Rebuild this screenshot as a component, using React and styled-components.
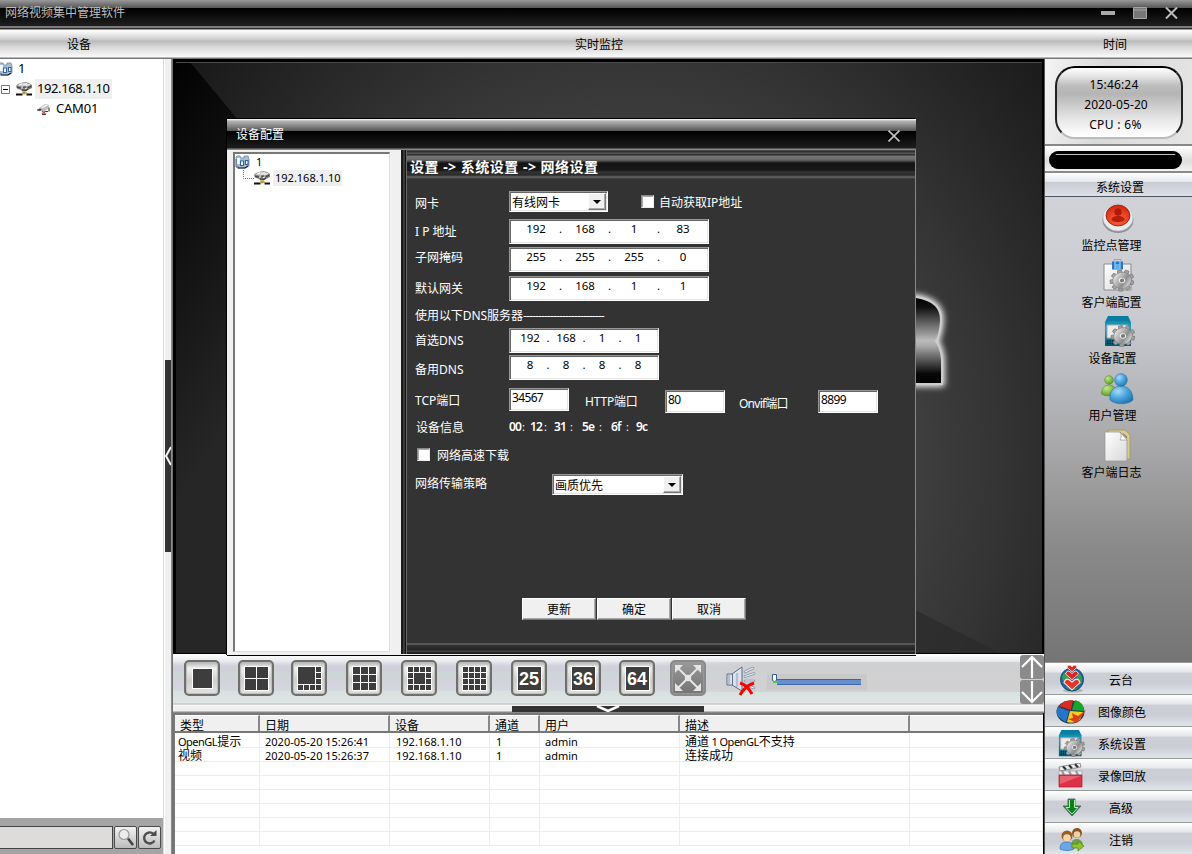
import React from "react";
import styled, { createGlobalStyle } from "styled-components";

const Global = createGlobalStyle`
  * { box-sizing: border-box; }
  html, body { margin: 0; padding: 0; overflow: hidden; }
  body { font: 12px/16px "Noto Sans", "Noto Sans CJK SC", sans-serif; color: #000; }
  svg { display: block; flex: none; }
`;

const Screen = styled.div`
  width: 1192px; height: 854px; overflow: hidden;
  display: flex; flex-direction: column; background: #000;
`;

/* ---------- top bars ---------- */
const TitleBar = styled.header`
  height: 30px; flex: none; display: flex; justify-content: space-between;
  padding: 5px 14px 0 5px; color: #bdbdbd;
  background: linear-gradient(#999 0, #555 8px, #000 8px, #1f1f1f 26px, #7c7c7c 26px, #7c7c7c 28px, #2e2e2e 28px, #2e2e2e 29px, #999 29px);
`;
const WindowControls = styled.div`display: flex; gap: 18px; padding-top: 2px;`;
const HeaderBar = styled.div`
  height: 29px; flex: none; display: flex; line-height: 29px; text-align: center;
  background: linear-gradient(#fff 0, #ececec 4px, #c9c9c9 10px, #bababa 11px, #d8d8d8 17px, #fafafa 27px, #777 28px);
`;
const HeaderCell = styled.div`width: ${(p) => p.$w}px;`;
const Body = styled.div`flex: 1; display: flex; min-height: 0;`;

/* ---------- left column ---------- */
const LeftPanel = styled.aside`width: 163px; display: flex; flex-direction: column; background: #fff;`;
const Tree = styled.div`flex: 1; font-size: 13px; line-height: 20px;`;
const TreeRow = styled.div`display: flex; align-items: center; height: 20px; padding-left: ${(p) => p.$indent || 0}px;`;
const TreeText = styled.span`
  margin-left: ${(p) => p.$ml}px; padding: 0 ${(p) => (p.$selected ? 2 : 0)}px;
  letter-spacing: ${(p) => p.$ls || 0}px; white-space: nowrap;
  ${(p) => (p.$lift ? "line-height: 18px; padding-bottom: 2px;" : "")}
  background: ${(p) => (p.$selected ? "#efefef" : "transparent")};
`;
const SearchBar = styled.div`height: 36px; display: flex; padding: 8px 0 0; gap: 1px; background: #a5a5a5;`;
const SearchField = styled.div`width: 113px; height: 23px; border: 1px solid #444; border-left: 0; background: #dddcdb;`;
const SearchButton = styled.div`
  width: 23px; height: 23px; border: 1px solid #4a4a4a; border-radius: 2px;
  display: grid; place-items: center; background: linear-gradient(#f2f2f2, #bcbcbc);
`;
const Splitter = styled.div`
  width: 10px; display: flex; flex-direction: column; padding-top: 301px;
  background: linear-gradient(90deg, #dcdcdc 0, #dcdcdc 1px, #fff 1px, #fff 2px, #f0f0f0 2px, #f0f0f0 8px, #999 8px, #666 10px);
`;
const SplitHandle = styled.div`
  width: 6px; height: 192px; margin-left: 2px; background: #333; display: flex; align-items: center;
`;

/* ---------- centre ---------- */
const Center = styled.main`width: 871px; display: flex; flex-direction: column; position: relative;`;
const Video = styled.div`
  height: 595px; padding: 3px 2px 0 3px; background: #000; flex: none; overflow: hidden;
`;
const VideoArt = styled.svg`width: 866px; height: 591px;`;
const Toolbar = styled.div`
  height: 50px; flex: none; display: flex; padding: 6px 0 0 11px;
  background:
    linear-gradient(90deg, rgba(205,205,205,0) 55%, rgba(208,208,208,.85) 66%) 0 8px / 100% 30px no-repeat,
    linear-gradient(#fff 0, #e9ecee 7px, #cfd0dc 12px, #cfd0d8 17px, #ccd6d6 18px, #d2d3dc 28px, #d4d6de 36px, #d9e0e0 37px, #dfe5e5 49px, #bbb 50px);
`;
const ToolButton = styled.div`
  width: 36px; height: 36px; margin-right: ${(p) => (p.$gap ?? 18)}px; flex: none;
  border: 2px solid ${(p) => (p.$gray ? "#8a8a8a" : "#6f6f6c")}; border-radius: 5px;
  display: grid; place-items: center;
  background: ${(p) => (p.$gray ? "linear-gradient(#999, #747474)" : "linear-gradient(#b3b3b3 0, #f0f0f0 6px, #d0d0d0 18px, #e2e2e2)")};
  box-shadow: inset 0 0 1px 1px ${(p) => (p.$gray ? "#999" : "#bbb")};
`;
const NumberTile = styled.span`
  width: 25px; height: 25px; border: 1px solid #fff; background: #3d3d3d; color: #fff;
  font: bold 18px/24px "Liberation Sans", sans-serif; text-align: center;
`;
const Slider = styled.div`width: 100px; height: 16px; margin: 14px 0 0 9px; background: #c9c9c9; display: flex;`;
const Arrows = styled.div`margin: -5px 0 0 auto; display: flex; flex-direction: column; gap: 1px;`;
const ArrowBox = styled.div`width: 24px; height: 24px; border-radius: 3px; background: #8b8b8b; display: grid; place-items: center;`;
const HSplit = styled.div`
  height: 9px; flex: none; display: flex; padding: 2px 0 0 339px;
  background: linear-gradient(#aaa 0, #fff 1px, #f0f0f0 2px, #f0f0f0 7px, #888 8px);
`;
const HHandle = styled.div`width: 192px; height: 6px; background: #333; display: grid; place-items: center;`;
const Log = styled.section`
  flex: 1; margin-right: 1px; background: #fff; border-top: 2px solid #777; border-left: 2px solid #777; overflow: hidden;
`;
const LogRow = styled.div`
  display: grid; grid-template-columns: 85px 130px 100px 50px 140px 230px 1fr;
  height: 14px; line-height: 14px; font-size: 12px;
  border-bottom: 1px solid #ededed;
`;
const LogHead = styled(LogRow)`
  height: 18px; line-height: 18px; background: #f0f0f0; border-bottom: 2px solid #777; margin-bottom: 1px;
`;
const LogCell = styled.div`
  padding: 1px 0 0 ${(p) => p.$pad ?? 6}px; border-right: 1px solid #ededed; white-space: pre;
`;
const Latin = styled.span`font-size: 11px; letter-spacing: ${(p) => (p.$tight ? -0.5 : 0)}px;`;
const HeadCell = styled.div`
  padding-left: 5px; border-right: 2px solid #888; border-top: 1px solid #fff; line-height: 19px; height: 16px;
  &:last-child { border-right: 0; }
`;

/* ---------- dialog ---------- */
const Dialog = styled.section`
  position: absolute; left: 54px; top: 60px; width: 689px; height: 537px;
  display: flex; flex-direction: column; background: #f0f0f0;
  border-bottom: 1px solid #000; box-shadow: -1px -1px 0 #000;
`;
const DialogTitle = styled.div`
  height: 31px; display: flex; justify-content: space-between; padding: 8px 16px 0 9px; color: #fff; flex: none;
  background: linear-gradient(#fff 0, #b5b5b5 2px, #555 12px, #000 12px, #1d1d1d 29px, #888 30px);
`;
const DialogBody = styled.div`flex: 1; display: flex; min-height: 0;`;
const DeviceList = styled.div`
  width: 157px; height: 500px; margin: 2px 11px 0 6px; flex: none; background: #fff;
  border-top: 2px solid #777; border-left: 2px solid #777; border-right: 1px solid #ddd; border-bottom: 1px solid #ddd;
  font-size: 11px; line-height: 16px;
`;
const DeviceRow = styled.div`height: 16px; display: flex; align-items: center; padding-left: ${(p) => p.$indent || 0}px;`;
const Settings = styled.div`
  width: 515px; height: 504px; background: #333; border-left: 2px solid #1b1b1b; border-right: 1px solid #888;
  box-shadow: inset 2px 0 0 #3a3a3a, inset 3px 0 0 #111, inset 4px 0 0 #6a6a6a;
  display: flex; flex-direction: column;
`;
const Crumbs = styled.h1`
  margin: 0 0 0 4px; height: 29px; padding: 8px 0 0 3px; color: #fff; font-size: 14px; line-height: 18px; font-weight: 700;
  letter-spacing: 0.5px; white-space: pre; flex: none;
  background: linear-gradient(#555 0, #222 2px, #666 3px, #222 5px, #777 6px, #666 10px, #141414 13px, #181818 20px, #333 22px, #2a2a2a 25px, #666 27px, #333 29px);
`;
const Form = styled.div`padding: 12px 0 0 12px; flex: 1; color: #fff;`;
const Row = styled.div`height: ${(p) => p.$h}px; display: flex; align-items: flex-start;`;
const Label = styled.div`
  width: ${(p) => p.$w || 94}px; margin-top: ${(p) => p.$dy || 0}px; margin-left: ${(p) => p.$ml || 0}px;
  line-height: 21px; white-space: pre; letter-spacing: ${(p) => p.$ls || 0}px; flex: none;
`;
const Sunken = styled.div`
  background: #fff; color: #000; border: 1px solid; border-color: #999 #fff #fff #999;
  box-shadow: inset 1px 1px 0 #666, inset -1px -1px 0 #e4e4e4; display: flex; flex: none;
  width: ${(p) => p.$w}px; height: ${(p) => p.$h || 25}px; margin-top: ${(p) => p.$dy || 0}px;
`;
const IpBox = styled(Sunken)`padding-left: ${(p) => p.$pad}px; line-height: 18px; font-size: 11.5px;`;
const Octet = styled.span`width: ${(p) => p.$w}px; text-align: center;`;
const PortBox = styled(Sunken)`padding-left: 2px; line-height: 18px; font-size: 12px; letter-spacing: -0.65px;`;
const SelectBox = styled(Sunken)`justify-content: space-between; padding: 1px 1px 0 2px; line-height: 19px;`;
const DropButton = styled.span`
  width: 18px; height: 17px; background: #f0f0f0; border: 1px solid; border-color: #fff #777 #777 #fff;
  display: grid; place-items: center; box-shadow: inset -1px -1px 0 #aaa;
`;
const Check = styled.span`
  width: 13px; height: 13px; background: #fff; border: 1px solid; border-color: #888 #eee #eee #888; flex: none;
  box-shadow: inset 1px 1px 0 #aaa;
  margin: ${(p) => p.$m};
`;
const Byte = styled.span`width: ${(p) => p.$w}px; font-weight: 600; font-size: 12px; line-height: 20px; letter-spacing: -0.8px;`;
const Colon = styled.span`width: ${(p) => p.$w}px; font-size: 11px; line-height: 20px;`;
const Buttons = styled.div`display: flex; gap: 1px; padding: 0 0 23px 119px;`;
const Button = styled.div`
  width: 74px; height: 22px; line-height: 22px; text-align: center; background: #f0f0f0; color: #000;
  border: 1px solid; border-color: #fff #777 #777 #fff; box-shadow: inset -1px -1px 0 #aaa;
`;
const PanelFoot = styled.div`height: 11px; margin-left: 4px; flex: none; border-top: 2px solid #555; background: linear-gradient(#333 0, #222 5px, #4a4a4a 6px, #1c1c1c 8px);`;

/* ---------- right column ---------- */
const RightPanel = styled.aside`
  width: 148px; display: flex; flex-direction: column; border-left: 1px solid #555; background: #e4e4e4;
`;
const ClockArea = styled.div`height: 87px; flex: none; padding: 7px 0 0 10px; border-bottom: 2px solid #888; background: linear-gradient(100deg, #f4f4f4, #d9d9d9 40%, #e5e5e5);`;
const Clock = styled.div`
  width: 128px; height: 73px; border-radius: 20px; border: 2px solid; border-color: #000 #222 #bbb #222;
  padding-top: 7px; text-align: center; line-height: 20px; font-size: 12px;
  background: linear-gradient(#fff 0, #e5e5e5 8px, #bcbcbc 18px, #b5b5b5 26px, #e8e8e8 52px, #fff 68px);
`;
const ClockLine = styled.div`padding-right: ${(p) => p.$pr || 0}px; letter-spacing: ${(p) => p.$ls || 0}px;`;
const PillArea = styled.div`height: 27px; flex: none; padding: 5px 0 0 4px; border-bottom: 2px solid #8a8a8a; background: linear-gradient(#fff, #ddd 60%, #f2f2f2);`;
const Pill = styled.div`width: 133px; height: 18px; border-radius: 9px; background: linear-gradient(#000 3px, #bbb 3px, #bbb 4px, #000 4px); border: 0 solid #000; border-width: 0 6px;`;
const MenuHead = styled.div`
  height: 24px; flex: none; line-height: 29px; padding-left: 51px; border-bottom: 1px solid #4d5563;
  background: linear-gradient(#fff 0, #e4e6ea 9px, #c7ccd2 9px, #dde1e6 23px);
`;
const Menu = styled.div`
  height: 465px; flex: none; display: flex; flex-direction: column; padding-top: 2px;
  background: linear-gradient(#d0d2d8 0, #c9cbd1 120px, #a6a6a8 255px, #8a8a8a 350px, #747474 466px);
`;
const MenuItem = styled.div`
  width: ${(p) => p.$w || 133}px; height: 56.7px; display: flex; flex-direction: column; align-items: center;
`;
const MenuIcon = styled.div`height: 39px; padding-left: ${(p) => p.$pl ?? 13}px; display: grid; place-items: center;`;
const Accordion = styled.div`flex: 1; display: flex; flex-direction: column;`;
const AccItem = styled.div`
  height: 32px; flex: none; display: flex; align-items: center; border-top: 1px solid #999;
  background: linear-gradient(#fff 0, #e6e8eb 9px, #cdcfd5 10px, #cbcdd4 20px, #dfe5e8 31px);
`;
const AccIcon = styled.div`width: 53px; padding-top: 1px; display: grid; place-items: center;`;
const AccText = styled.div`flex: 1; padding: ${(p) => (p.$short ? "4px 48px 0 0" : "4px 46px 0 0")}; text-align: center; white-space: nowrap;`;

/* ---------- icons ---------- */
const Folder = ({ clipped }) => (
  <svg width={clipped ? 13 : 15} height="14" viewBox={clipped ? "2 0 13 14" : "0 0 15 14"}>
    <path d="M1 2l1-1h3l1 2h3V1h4l1 3v7l-4 2H2z" fill="#a9bfd4" stroke="#7088a4" strokeWidth=".8" />
    <path d="M2 3h3v6H2z" fill="#eef5fb" />
    <path d="M5.500 6h3v4.500h-3zM10.500 5.500h2.500V9.500h-2.500z" fill="#fff" stroke="#2f659f" strokeWidth="1.100" />
    <path d="M1 4v8h3" stroke="#4a6a90" strokeWidth="1" fill="none" />
    <path d="M3 13h7l3-2" stroke="#15191e" strokeWidth="1.200" fill="none" />
  </svg>
);
const Router = () => (
  <svg width="17" height="14" viewBox="0 0 17 14">
    <path d="M0 4l2-2 3-1 4-1 4 1 3 2v3l-4 2-3 2H7L5 8 1 6.500z" fill="#7d7d7d" />
    <path d="M1 3.500L5 1l4-.5L15 2.500l-4 2-4 .5z" fill="#cfcfcf" />
    <path d="M3 3l3-1M7 3l4-1.500M10 3.500l4-1M5 6h2M9 6.500l2-.5" stroke="#f6f6f6" />
    <path d="M1 5.500l4 .5M7 5h3M12 5.500l3-1M6 8l4 .5 2-1.500" stroke="#3d3d3d" strokeWidth="1.100" fill="none" />
    <path d="M7 9h2.500v3.500H7z" fill="#e8b428" />
    <path d="M0 12.500h6.500M10.500 12.500H16" stroke="#111" strokeWidth="2" />
    <path d="M6 11h5" stroke="#9c7a1c" />
  </svg>
);
const Cam = () => (
  <svg width="13" height="12" viewBox="0 0 13 12">
    <path d="M2 5l6-4 4 1-1 4-5 3z" fill="#bdbdbd" />
    <path d="M4 4.500l5-3 2 .7-5 3z" fill="#f1f1f1" />
    <path d="M0 6.500l3-1 2 1.500-2 1-3-.5z" fill="#444" />
    <path d="M12 4.500v4M8 8.500h3M5 11.500h4" stroke="#333" strokeWidth="1.100" fill="none" />
    <path d="M5 8l3.500 3M8.500 8L5 11" stroke="#d8473c" strokeWidth="1.200" />
  </svg>
);
const Gear = ({ x, y, r }) => (
  <g transform={`translate(${x} ${y}) rotate(-15) scale(1 .88)`}>
    {[0, 40, 80, 120, 160, 200, 240, 280, 320].map((a) => (
      <path key={a} transform={`rotate(${a})`} d={`M-2.500 ${-r * 0.7}L-1.900 ${-r}H1.900L2.500 ${-r * 0.7}z`} fill="#a2a2a2" stroke="#6c6c6c" strokeWidth=".6" />
    ))}
    <circle r={r * 0.78} fill="url(#gearFill)" stroke="#7a7a7a" strokeWidth=".5" />
    <circle r={r * 0.22} fill="#7a7a7a" stroke="#ededed" strokeWidth="1" />
  </g>
);
const Defs = () => (
  <svg width="0" height="0" style={{ position: "absolute" }}>
    <defs>
      <linearGradient id="gearFill" x1="0" y1="0" x2="1" y2="1">
        <stop offset="0" stopColor="#fafafa" /><stop offset=".4" stopColor="#b4b4b4" />
        <stop offset=".6" stopColor="#8d8d8d" /><stop offset=".8" stopColor="#c9c9c9" /><stop offset="1" stopColor="#6b6b6b" />
      </linearGradient>
      <linearGradient id="teal" x1="0" y1="0" x2="0" y2="1">
        <stop offset="0" stopColor="#067a9c" /><stop offset=".4" stopColor="#25a4c4" /><stop offset="1" stopColor="#03566f" />
      </linearGradient>
      <radialGradient id="blue" cx=".35" cy=".3" r=".8">
        <stop offset="0" stopColor="#a6dcfa" /><stop offset=".5" stopColor="#4aa5dc" /><stop offset="1" stopColor="#1d6ea8" />
      </radialGradient>
      <radialGradient id="green" cx=".35" cy=".3" r=".8">
        <stop offset="0" stopColor="#c1e986" /><stop offset="1" stopColor="#4c9420" />
      </radialGradient>
      <radialGradient id="red" cx=".5" cy=".7" r=".7">
        <stop offset="0" stopColor="#ff6a3c" /><stop offset="1" stopColor="#d32210" />
      </radialGradient>
      <linearGradient id="page" x1="0" y1="0" x2="1" y2="1">
        <stop offset="0" stopColor="#fff" /><stop offset="1" stopColor="#d8d8d8" />
      </linearGradient>
    </defs>
  </svg>
);
const RecordIcon = () => (
  <svg width="32" height="31" viewBox="0 0 32 31">
    <ellipse cx="16" cy="17" rx="15.500" ry="13" fill="#8e9296" />
    <ellipse cx="16" cy="14.500" rx="15" ry="13.500" fill="#e9edef" stroke="#b5babd" strokeWidth=".6" />
    <ellipse cx="16" cy="12.500" rx="12" ry="10.500" fill="url(#red)" stroke="#8c1206" strokeWidth=".7" />
    <circle cx="16" cy="9" r="3.700" fill="#b01a0a" />
    <path d="M9.500 17c0-3 3-4 6.500-4s6.500 1 6.500 4c-3 3-10 3-13 0z" fill="#b41e0c" />
  </svg>
);
const ClientIcon = () => (
  <svg width="31" height="33" viewBox="0 0 31 33">
    <path d="M1 5h27v26H1z" fill="url(#page)" stroke="#8c8c8c" />
    <path d="M11 .5h7v4h-7z" fill="#c7ccd0" stroke="#8b9297" strokeWidth=".7" />
    <path d="M9 2.500h11v8H9z" fill="#2478cc" />
    <path d="M12.500 5h4v5h-4z" fill="#58b0f0" /><path d="M12 1v9M17 1v9" stroke="#c9d8e6" />
    <Gear x={19} y={21.500} r={12} />
  </svg>
);
const DeviceIcon = ({ s = 31 }) => (
  <svg width={s} height={s} viewBox="0 0 31 31">
    <path d="M4 0h20l3 6v24H1V6z" fill="url(#teal)" />
    <path d="M4 1h20l2 5-2-1H4L2 6z" fill="#0b7d9f" />
    <path d="M3 9h21l-1 13H3z" fill="#ececec" stroke="#aaa" />
    <path d="M3 25h6M3 27.500h6" stroke="#012a36" strokeWidth="1.500" strokeDasharray="1.500 1" />
    <Gear x={19} y={20} r={12} />
  </svg>
);
const UsersIcon = () => (
  <svg width="33" height="32" viewBox="0 0 33 32">
    <circle cx="8" cy="7" r="4.300" fill="url(#green)" stroke="#4c8a24" strokeWidth=".5" />
    <path d="M.500 21c0-6 3-9 7.500-9s7 3 7 9c-3 2.500-11 2.500-14.500 0z" fill="url(#green)" stroke="#4c8a24" strokeWidth=".5" />
    <path d="M9 27c-1-9 4-14 11-14s12 5 12 14c-5 5-18 5-23 0z" fill="url(#blue)" stroke="#2a74a8" strokeWidth=".6" />
    <circle cx="20" cy="7" r="6.300" fill="url(#blue)" stroke="#2a74a8" strokeWidth=".6" />
  </svg>
);
const PagesIcon = () => (
  <svg width="27" height="33" viewBox="0 0 27 33">
    <path d="M4 1h17l5 5v24H4z" fill="#d6cd8c" stroke="#9c9763" strokeWidth=".8" />
    <path d="M1 3h15l7 8v21H1z" fill="url(#page)" stroke="#999" strokeWidth=".8" />
    <path d="M16 3c2 3 1 6 0 8h7z" fill="#fff" stroke="#888" strokeWidth=".6" />
    <path d="M18 4l5 5.500V8l-3-3z" fill="#6c6c60" />
  </svg>
);
const heart = (y, w) => `M13 ${y + w * 1.35}L${13 - w} ${y + w * 0.45}Q${13 - w * 0.7} ${y - w * 0.4} 13 ${y + w * 0.4}Q${13 + w * 0.7} ${y - w * 0.4} ${13 + w} ${y + w * 0.45}z`;
const PtzIcon = () => (
  <svg width="26" height="28" viewBox="0 0 26 28">
    <ellipse cx="14" cy="25.500" rx="10" ry="2" fill="#999" opacity=".6" />
    <circle cx="13" cy="14.500" r="11.500" fill="#2566a0" stroke="#174a78" />
    <path d="M3 11c3-5 6-4 7-1s-2 8-5 9zM18 7c5 2 6 8 4 12l-4-3zM7 22l6-3 5 5c-4 2-8 1-11-2z" fill="#35a04a" />
    <path d={heart(0, 5)} fill="#e0261e" stroke="#ffe0da" strokeWidth=".9" />
    <path d={heart(6, 6.500)} fill="#e0261e" stroke="#ffe0da" strokeWidth=".9" />
    <path d={heart(14, 8)} fill="#ea3127" stroke="#ffe0da" strokeWidth="1.100" />
  </svg>
);
const ColorIcon = () => (
  <svg width="31" height="25" viewBox="0 0 31 25">
    <ellipse cx="14.500" cy="13" rx="14" ry="11.500" fill="#2a3a4a" />
    <path d="M15 11L3 7Q8 1 17 1z" fill="#dd2a20" />
    <path d="M16 11l3-10q9 2 9 11z" fill="#14a82c" />
    <path d="M13 12L2 8q-5 9 8 15z" fill="#2277cc" />
    <path d="M14 12l13 1-3 8q-6 4-13 2z" fill="#f0d01e" />
    <path d="M16 14l6 3 8-6-9 13-9-4 5-1z" fill="#d9401e" />
  </svg>
);
const ClapIcon = () => (
  <svg width="26" height="25" viewBox="0 0 26 25">
    <path d="M1 4L22 0l1 4L2 8z" fill="#eee" stroke="#555" strokeWidth=".6" />
    <path d="M5 3.500l3 3M11 2.300l3 3M17 1.200l3 3" stroke="#333" strokeWidth="2.200" />
    <path d="M1 8h23v4H1z" fill="#eee" stroke="#999" strokeWidth=".6" />
    <path d="M4 8l2 4M11 8l2 4M18 8l2 4" stroke="#999" strokeWidth="2.200" />
    <path d="M1 12h23v12H1z" fill="#dd3145" stroke="#a81d30" strokeWidth=".7" />
    <path d="M2 13h21L2 21z" fill="#f07482" opacity=".7" />
  </svg>
);
const DownIcon = () => (
  <svg width="20" height="19" viewBox="0 0 20 19">
    <path d="M6 1h7v7h6l-9 10L1 8h5z" fill="#0c7f1c" stroke="#667" strokeWidth="1" />
    <path d="M7.500 2v7.500H4L10 16l6-6.500h-3.500V2" fill="none" stroke="#b7f0b0" strokeWidth="1" />
  </svg>
);
const LogoutIcon = () => (
  <svg width="26" height="25" viewBox="0 0 26 25">
    <circle cx="18" cy="6" r="5" fill="#8a5522" /><circle cx="18" cy="7.500" r="3.300" fill="#f3cfa4" />
    <path d="M12 19c0-6 3-7 6-7s6 2 6 7z" fill="#6da04a" />
    <circle cx="8" cy="9" r="5.500" fill="#9a6022" /><circle cx="8" cy="11" r="3.800" fill="#f7d6ae" />
    <path d="M1 22c0-6 3-7 7-7s7 2 7 7c-4 2-10 2-14 0z" fill="#6ba6e6" stroke="#2b66a8" strokeWidth=".6" />
    <path d="M13 17h6v-3l6 5-6 5v-3h-6z" fill="#8fc42c" stroke="#55801a" strokeWidth=".7" />
  </svg>
);

/* Cells are [x, y, w, h] on a 4 x 4 board. */
const unit = [];
for (let j = 0; j < 4; j++) for (let i = 0; i < 4; i++) unit.push([i, j, 1, 1]);
const layouts = {
  one: [[0, 0, 4, 4]],
  four: [[0, 0, 2, 2], [2, 0, 2, 2], [0, 2, 2, 2], [2, 2, 2, 2]],
  eight: [[0, 0, 3, 3], ...unit.filter(([x, y]) => x === 3 || y === 3)],
  nine: [0, 1, 2].flatMap((j) => [0, 1, 2].map((i) => [(i * 4) / 3, (j * 4) / 3, 4 / 3, 4 / 3])),
  thirteen: [[1, 1, 2, 2], ...unit.filter(([x, y]) => x === 0 || x === 3 || y === 0 || y === 3)],
  sixteen: unit,
};
const GridIcon = ({ kind }) => {
  const s = kind === "one" ? 21 : 25;
  const step = (s - 1) / 4;
  return (
    <svg width={s} height={s} viewBox={`0 0 ${s} ${s}`} shapeRendering="crispEdges">
      <rect width={s} height={s} fill="#fff" />
      {layouts[kind].map(([x, y, w, h]) => (
        <rect key={`${x}-${y}`} x={x * step + 1} y={y * step + 1} width={w * step - 1} height={h * step - 1} fill="#3d3d3d" />
      ))}
    </svg>
  );
};
const Speaker = () => (
  <svg width="34" height="37" viewBox="-1 -6 34 37">
    <path d="M2 8h5l10-7v24L7 19H2z" fill="#dfe5ee" stroke="#5d6b84" />
    <path d="M4 9v9M12 7v14" stroke="#b3bfd2" strokeWidth="2.500" />
    <path d="M7.500 8v11" stroke="#5d6b84" />
    <path d="M20 6l8-4M20 10.500l9-3M20 15h9M20 19l9 3" stroke="#8292ae" strokeWidth="2.600" strokeLinecap="round" />
    <path d="M20 6l8-4M20 10.500l9-3M20 15h9M20 19l9 3" stroke="#eef3fa" strokeWidth="1.100" strokeLinecap="round" />
    <path d="M15 17q7 2 12 11M29 17Q20 20 15 29" stroke="#f00" strokeWidth="3" fill="none" />
  </svg>
);

const Ip = ({ w, pad, ow, dw, parts }) => (
  <IpBox $w={w} $pad={pad}>
    {parts.map((p, i) => (
      <React.Fragment key={i}>
        <Octet $w={ow}>{p}</Octet>
        {i < 3 && <Octet $w={dw}>.</Octet>}
      </React.Fragment>
    ))}
  </IpBox>
);
const WideIp = ({ parts }) => <Ip w={200} pad={7} ow={38} dw={11} parts={parts} />;
const ShortIp = ({ parts }) => <Ip w={150} pad={7} ow={26} dw={10} parts={parts} />;
const Select = ({ w, children }) => (
  <SelectBox $w={w} $h={21}>
    <span>{children}</span>
    <DropButton><svg width="8" height="4" viewBox="0 0 8 4"><path d="M0 0h8L4 4z" /></svg></DropButton>
  </SelectBox>
);
const Mixed = ({ text = "" }) =>
  text.split(/([\x20-\x7f]+)/).filter(Boolean).map((part, i) =>
    /^[\x20-\x7f]+$/.test(part) ? <Latin key={i} $tight={part !== text}>{part}</Latin> : part
  );

const mac = [["00", 13, 8], ["12", 14, 10], ["31", 16, 12], ["5e", 17, 12], ["6f", 15, 10], ["9c", 15, 0]];
const columns = ["类型", "日期", "设备", "通道", "用户", "描述", ""];
const logs = [
  ["OpenGL提示", "2020-05-20 15:26:41", "192.168.1.10", "1", "admin", "通道 1 OpenGL不支持"],
  ["视频", "2020-05-20 15:26:37", "192.168.1.10", "1", "admin", "连接成功"],
  [], [], [], [], [], [],
];
const cellPad = [3, 5, 6, 6, 5, 5, 0];
const menu = [
  ["监控点管理", RecordIcon, 133, 12], ["客户端配置", ClientIcon, 133, 14], ["设备配置", DeviceIcon, 135, 14],
  ["用户管理", UsersIcon, 135, 10], ["客户端日志", PagesIcon, 133, 12],
];
const sections = [
  ["云台", PtzIcon], ["图像颜色", ColorIcon], ["系统设置", () => <DeviceIcon s={27} />],
  ["录像回放", ClapIcon], ["高级", DownIcon], ["注销", LogoutIcon],
];

export default function App() {
  return (
    <Screen>
      <Global />
      <Defs />
      <TitleBar>
        <span>网络视频集中管理软件</span>
        <WindowControls>
          <svg width="14" height="12"><path d="M0 6h14" stroke="#aaa" strokeWidth="4" /></svg>
          <svg width="14" height="12"><path d="M.5 .5h13v11H.5z" fill="#777" stroke="#a5a5a5" /><path d="M0 3h14" stroke="#a5a5a5" /></svg>
          <svg width="13" height="12"><path d="M1 .5l11 11M12 .5l-11 11" stroke="#bbb" strokeWidth="2" /></svg>
        </WindowControls>
      </TitleBar>
      <HeaderBar>
        <HeaderCell $w={158}>设备</HeaderCell>
        <HeaderCell $w={882}>实时监控</HeaderCell>
        <HeaderCell $w={150}>时间</HeaderCell>
      </HeaderBar>
      <Body>
        <LeftPanel>
          <Tree>
            <TreeRow><Folder clipped /><TreeText $ml={5} $lift>1</TreeText></TreeRow>
            <TreeRow $indent={1}>
              <svg width="9" height="9"><path d="M.5 .5h8v8h-8z" fill="#fff" stroke="#777" /><path d="M2 4.500h5" stroke="#000" /></svg>
              <svg width="6" height="1" /><Router />
              <TreeText $ml={2} $selected $lift $ls={-0.4}>192.168.1.10</TreeText>
            </TreeRow>
            <TreeRow $indent={37}><Cam /><TreeText $ml={6} $lift $ls={-0.2}>CAM01</TreeText></TreeRow>
          </Tree>
          <SearchBar>
            <SearchField />
            <SearchButton>
              <svg width="19" height="19" viewBox="0 0 19 19">
                <path d="M12 10.500l5 6.500" stroke="#444" strokeWidth="2.600" />
                <circle cx="8" cy="6.500" r="5" fill="#ececec" stroke="#9a9a9a" strokeWidth="1.200" />
              </svg>
            </SearchButton>
            <SearchButton>
              <svg width="17" height="17" viewBox="0 0 17 17">
                <path d="M12.500 5A5.500 5.500 0 1 0 13.500 11.500" fill="none" stroke="#4d4d4d" strokeWidth="2.400" />
                <path d="M9 7h6.500V1z" fill="#4d4d4d" />
              </svg>
            </SearchButton>
          </SearchBar>
        </LeftPanel>
        <Splitter>
          <SplitHandle>
            <svg width="6" height="22" viewBox="0 0 6 22"><path d="M6 2L1 11l5 9" fill="none" stroke="#fff" strokeWidth="2" /></svg>
          </SplitHandle>
        </Splitter>

        <Center>
          <Video>
            <VideoArt viewBox="0 0 866 591">
              <defs>
                <radialGradient id="room" cx="0" cy="0" r="1" gradientUnits="userSpaceOnUse" gradientTransform="translate(450 400) scale(580 640)">
                  <stop offset="0" stopColor="#4a4a4a" /><stop offset=".45" stopColor="#424242" /><stop offset=".63" stopColor="#353535" />
                  <stop offset=".8" stopColor="#272727" /><stop offset="1" stopColor="#171717" />
                </radialGradient>
                <linearGradient id="wall" x1="0" y1="0" x2=".35" y2=".5">
                  <stop offset="0" stopColor="#020202" /><stop offset=".5" stopColor="#131313" /><stop offset="1" stopColor="#262626" />
                </linearGradient>
                <linearGradient id="metal" x1="0" y1="0" x2="0" y2="1">
                  <stop offset="0" stopColor="#000" /><stop offset=".12" stopColor="#111" /><stop offset=".5" stopColor="#bbb" />
                  <stop offset=".56" stopColor="#aaa" /><stop offset=".88" stopColor="#080808" /><stop offset="1" stopColor="#000" />
                </linearGradient>
                <filter id="glow" x="-50%" y="-50%" width="200%" height="200%"><feGaussianBlur stdDeviation="3" /></filter>
              </defs>
              <rect width="866" height="591" fill="url(#room)" />
              <path d="M0 0h14L280 320V591H0z" fill="url(#wall)" />
              <path d="M700 528L824 591H700z" fill="#2b2b2b" opacity=".75" />
              <path d="M0 .5h866" stroke="#4a4a4a" />
              <path d="M720 235h20q26 4 25 24-1 14-5 20 7 10 6 26v17h-46z" fill="#fff" stroke="#fff" strokeWidth="5" filter="url(#glow)" />
              <path d="M720 235h20q26 4 25 24-1 14-5 20 7 10 6 26v17h-46z" fill="url(#metal)" stroke="#ccc" strokeWidth="2" />
            </VideoArt>
          </Video>
          <Toolbar>
            <ToolButton><GridIcon kind="one" /></ToolButton>
            <ToolButton $gap={17}><GridIcon kind="four" /></ToolButton>
            <ToolButton $gap={19}><GridIcon kind="eight" /></ToolButton>
            <ToolButton $gap={19}><GridIcon kind="nine" /></ToolButton>
            <ToolButton $gap={19}><GridIcon kind="thirteen" /></ToolButton>
            <ToolButton $gap={19}><GridIcon kind="sixteen" /></ToolButton>
            <ToolButton><NumberTile>25</NumberTile></ToolButton>
            <ToolButton><NumberTile>36</NumberTile></ToolButton>
            <ToolButton $gap={15}><NumberTile>64</NumberTile></ToolButton>
            <ToolButton $gray>
              <svg width="28" height="28" viewBox="0 0 28 28" fill="none" stroke="#e6e6e6" strokeWidth="2">
                <path d="M3 3l22 22M25 3L3 25" />
                <path d="M1 1h8L1 9zM27 1v8l-8-8zM27 27h-8l8-8zM1 27v-8l8 8z" fill="#e6e6e6" stroke="none" />
                <circle cx="14" cy="14" r="3.200" fill="#e6e6e6" stroke="none" />
              </svg>
            </ToolButton>
            <Speaker />
            <Slider>
              <svg width="100" height="16">
                <path d="M10 5h84v6H10z" fill="#6690cc" /><path d="M10 5.500h84" stroke="#40639c" /><path d="M10 10.500h84" stroke="#3d68b0" />
                <path d="M5.500 .5h4v6l-2 1-2-1z" fill="#fff" stroke="#3a5b95" /><path d="M6 8h5" stroke="#3fd04a" strokeWidth="2" />
              </svg>
            </Slider>
            <Arrows>
              {["M12 23V3M2 12L12 2l10 10", "M12 1v20M2 12l10 10 10-10"].map((d) => (
                <ArrowBox key={d}><svg width="24" height="24"><path d={d} fill="none" stroke="#fff" strokeWidth="2.200" /></svg></ArrowBox>
              ))}
            </Arrows>
          </Toolbar>
          <HSplit>
            <HHandle><svg width="24" height="6"><path d="M1 0l11 5L23 0" fill="none" stroke="#fff" strokeWidth="2.500" /></svg></HHandle>
          </HSplit>
          <Log>
            <LogHead>{columns.map((c, i) => <HeadCell key={i}>{c}</HeadCell>)}</LogHead>
            {logs.map((row, r) => (
              <LogRow key={r}>
                {columns.map((_, i) => <LogCell key={i} $pad={cellPad[i]}><Mixed text={row[i]} /></LogCell>)}
              </LogRow>
            ))}
          </Log>

          <Dialog>
            <DialogTitle>
              <span>设备配置</span>
              <svg width="12" height="20" viewBox="0 -3 12 20"><path d="M.5 .5l11 11M11.500 .5l-11 11" stroke="#c4c4c4" strokeWidth="1.700" /></svg>
            </DialogTitle>
            <DialogBody>
              <DeviceList>
                <DeviceRow><Folder /><TreeText $ml={6}>1</TreeText></DeviceRow>
                <DeviceRow $indent={8}>
                  <svg width="11" height="16"><path d="M.5 0v8.500H11" fill="none" stroke="#777" strokeDasharray="1 1" /></svg>
                  <Router /><TreeText $ml={2} $selected>192.168.1.10</TreeText>
                </DeviceRow>
              </DeviceList>
              <Settings>
                <Crumbs>{"设置 -> 系统设置 -> 网络设置"}</Crumbs>
                <Form>
                  <Row $h={28}>
                    <Label $dy={2}>网卡</Label>
                    <Select w={99}>有线网卡</Select>
                    <Check $m="4px 5px 0 33px" />
                    <Label $dy={1}>自动获取IP地址</Label>
                  </Row>
                  <Row $h={28}><Label $dy={2}>I P 地址</Label><WideIp parts={["192", "168", "1", "83"]} /></Row>
                  <Row $h={29}><Label>子网掩码</Label><WideIp parts={["255", "255", "255", "0"]} /></Row>
                  <Row $h={29}><Label $dy={2}>默认网关</Label><WideIp parts={["192", "168", "1", "1"]} /></Row>
                  <Row $h={23}>
                    <Label $w={108} $ls={-0.05}>使用以下DNS服务器</Label>
                    <Label $w={82} $ls={-0.87}>{"-".repeat(27)}</Label>
                  </Row>
                  <Row $h={27}><Label $dy={2}>首选DNS</Label><ShortIp parts={["192", "168", "1", "1"]} /></Row>
                  <Row $h={33}><Label $dy={4}>备用DNS</Label><ShortIp parts={["8", "8", "8", "8"]} /></Row>
                  <Row $h={29}>
                    <Label $dy={2}>TCP端口</Label>
                    <PortBox $w={60} $h={23}>34567</PortBox>
                    <Label $ml={16} $w={80} $dy={3} $ls={-0.2}>HTTP端口</Label>
                    <PortBox $w={60} $h={23} $dy={2}>80</PortBox>
                    <Label $ml={14} $w={79} $dy={5} $ls={-0.75}>Onvif端口</Label>
                    <PortBox $w={60} $h={23} $dy={2}>8899</PortBox>
                  </Row>
                  <Row $h={28}>
                    <Label $ml={1} $w={93}>设备信息</Label>
                    {mac.map(([b, w, c], i) => (
                      <React.Fragment key={b}>
                        <Byte $w={w}>{b}</Byte>{i < 5 && <Colon $w={c}>:</Colon>}
                      </React.Fragment>
                    ))}
                  </Row>
                  <Row $h={29}><Check $m="3px 7px 0 2px" /><Label>网络高速下载</Label></Row>
                  <Row $h={22}><Label $w={137} $dy={-1}>网络传输策略</Label><Select w={131}>画质优先</Select></Row>
                </Form>
                <Buttons><Button>更新</Button><Button>确定</Button><Button>取消</Button></Buttons>
                <PanelFoot />
              </Settings>
            </DialogBody>
          </Dialog>
        </Center>

        <RightPanel>
          <ClockArea>
            <Clock>
              <ClockLine $pr={10} $ls={0.15}>15:46:24</ClockLine>
              <ClockLine $pr={6} $ls={0.1}>2020-05-20</ClockLine>
              <ClockLine $pr={7} $ls={0.35}>CPU : 6%</ClockLine>
            </Clock>
          </ClockArea>
          <PillArea><Pill /></PillArea>
          <MenuHead>系统设置</MenuHead>
          <Menu>
            {menu.map(([name, Icon, w, pl]) => (
              <MenuItem key={name} $w={w}><MenuIcon $pl={pl}><Icon /></MenuIcon>{name}</MenuItem>
            ))}
          </Menu>
          <Accordion>
            {sections.map(([name, Icon]) => (
              <AccItem key={name}><AccIcon><Icon /></AccIcon><AccText $short={name.length === 2}>{name}</AccText></AccItem>
            ))}
          </Accordion>
        </RightPanel>
      </Body>
    </Screen>
  );
}
